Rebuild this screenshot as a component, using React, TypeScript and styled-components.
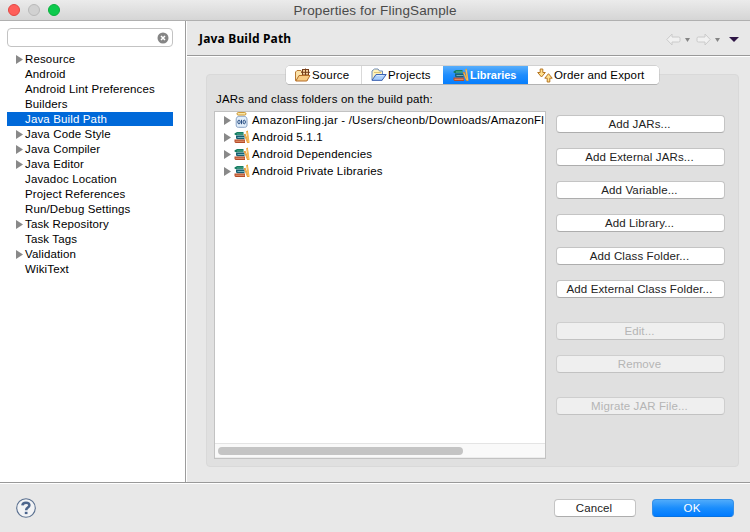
import React from 'react';
import styled, { createGlobalStyle } from 'styled-components';

const Global = createGlobalStyle`
  * { box-sizing: border-box; }
  body { margin: 0; background: #e8e8e8; overflow: hidden; }
  svg { display: block; flex: none; }
`;

const Window = styled.div`
  width: 750px;
  height: 532px;
  display: flex;
  flex-direction: column;
  background: #e8e8e8;
  color: #000;
  font-family: "Liberation Sans", Arial, sans-serif;
  font-size: 11.5px;
  letter-spacing: 0.14px;
  white-space: nowrap;
`;

const TitleBar = styled.header`
  height: 21px;
  flex: none;
  display: grid;
  grid-template-columns: 80px 1fr 80px;
  align-items: center;
  background: linear-gradient(#ebebeb, #d5d5d5);
  border-bottom: 1px solid #b0b0b0;
`;
const Lights = styled.div`
  display: flex;
  gap: 8px;
  padding-left: 8px;
`;
const Light = styled.span<{ $fill: string; $edge: string }>`
  width: 12px;
  height: 12px;
  border-radius: 50%;
  background: ${(p) => p.$fill};
  border: 1px solid ${(p) => p.$edge};
`;
const Title = styled.div`
  text-align: center;
  font-size: 13.5px;
  letter-spacing: 0.13px;
  color: #4a4a4a;
`;

const Body = styled.div`
  height: 461px;
  flex: none;
  display: flex;
`;
const Sidebar = styled.aside`
  width: 186px;
  flex: none;
  background: #fff;
  border-right: 1px solid #9c9c9c;
  padding: 7px 12px 0 7px;
`;
const SearchBox = styled.div`
  height: 19px;
  width: 166px;
  border: 1px solid #c3c3c3;
  border-radius: 4px;
  display: flex;
  align-items: center;
  justify-content: flex-end;
  padding-right: 3px;
  margin-bottom: 5px;
`;
const TreeRow = styled.div<{ $selected?: boolean }>`
  width: 166px;
  height: 14px;
  margin-bottom: 1px;
  display: grid;
  grid-template-columns: 9px 9px 1fr;
  align-items: center;
  line-height: 14px;
  background: ${(p) => (p.$selected ? '#0069d9' : 'transparent')};
  color: ${(p) => (p.$selected ? '#fff' : '#000')};
`;
const TreeLabel = styled.span`
  grid-column: 3;
`;
const Twisty = styled.span`
  grid-column: 2;
`;

const Content = styled.main`
  flex: 1;
  min-width: 0;
  border-left: 1px solid #fff;
  display: flex;
  flex-direction: column;
`;
const PageHeader = styled.div`
  height: 36px;
  flex: none;
  display: flex;
  align-items: center;
  justify-content: space-between;
  padding: 0 11px 0 12px;
  border-bottom: 1px solid #fff;
  box-shadow: inset 0 -1px 0 #999;
`;
const PageTitle = styled.h1`
  margin: 0;
  font-family: "Noto Sans", sans-serif;
  font-size: 12px;
  font-weight: 700;
  letter-spacing: 0.18px;
  line-height: 18px;
`;
const NavTools = styled.div`
  display: flex;
  align-items: center;
  margin-top: 2px;
`;
const NavGap = styled.span<{ $w: number }>`
  width: ${(p) => p.$w}px;
`;

const TabBar = styled.nav`
  height: 18px;
  margin: 9px 0 -10px 99px;
  width: 373px;
  flex: none;
  z-index: 1;
  display: flex;
  background: #fff;
  border-radius: 4px;
  box-shadow: 0 0 0 0.5px #b9b9b9, 0 1px 0 #adadad;
  overflow: hidden;
  overflow: clip;
`;
const Tab = styled.div<{ $w: number; $pad: number; $active?: boolean }>`
  width: ${(p) => p.$w}px;
  padding-left: ${(p) => p.$pad}px;
  display: flex;
  align-items: center;
  gap: 1px;
  font-size: ${(p) => (p.$active ? '11px' : '11.5px')};
  letter-spacing: ${(p) => (p.$active ? '0' : '0.14px')};
  font-weight: ${(p) => (p.$active ? 700 : 400)};
  color: ${(p) => (p.$active ? '#fff' : '#000')};
  background: ${(p) => (p.$active ? 'linear-gradient(#58aefb, #1f8dfd 50%, #067efd)' : '#fff')};
  &:first-child { border-right: 1px solid #d9d9d9; }
`;

const Group = styled.section`
  margin-left: 19px;
  width: 533px;
  height: 393px;
  flex: none;
  border: 1px solid #d9d9d9;
  border-radius: 4px;
  background: #e0e0e0;
  padding: 16px 13px 0 7px;
  display: grid;
  grid-template-columns: 332px 169px;
  grid-template-rows: 20px 348px;
  column-gap: 10px;
`;
const ListCaption = styled.div`
  grid-column: 1 / -1;
  padding-left: 2px;
  line-height: 16px;
  letter-spacing: 0.21px;
`;
const List = styled.div`
  border: 1px solid #c2c2c2;
  background: #fff;
  display: flex;
  flex-direction: column;
  min-width: 0;
  overflow: hidden;
`;
const ListRows = styled.div`
  flex: 1;
`;
const ListRow = styled.div`
  height: 17px;
  line-height: 16px;
  letter-spacing: 0.19px;
  display: flex;
  align-items: center;
  padding: 0 0 1px 9px;
`;
const RowIcon = styled.span`
  width: 16px;
  height: 16px;
  margin: 0 2px 0 3px;
  display: flex;
  align-items: center;
  justify-content: center;
`;
const ScrollTrack = styled.div`
  height: 15px;
  border-top: 1px solid #e4e4e4;
  border-bottom: 1px solid #ececec;
  background: #f9f9f9;
  padding: 3px;
`;
const ScrollThumb = styled.div`
  width: 245px;
  height: 8px;
  border-radius: 4px;
  background: #c4c4c4;
`;

const Actions = styled.div`
  padding-top: 4px;
  display: flex;
  flex-direction: column;
  gap: 15px;
`;
const Button = styled.button<{ $primary?: boolean; $before?: number; $w?: number }>`
  width: ${(p) => (p.$w ? `${p.$w}px` : '100%')};
  height: 18px;
  flex: none;
  margin: ${(p) => p.$before ?? 0}px 0 0;
  padding: 0 2px 0 0;
  border: 1px solid ${(p) => (p.$primary ? '#3590e8' : '#c4c4c4')};
  border-bottom-color: ${(p) => (p.$primary ? '#0872e0' : '#adadad')};
  border-radius: 4px;
  background: ${(p) => (p.$primary ? 'linear-gradient(#4fabfb, #1a8dfc 50%, #007bff)' : '#fff')};
  color: ${(p) => (p.$primary ? '#fff' : '#222')};
  font: 11.5px/16px "Liberation Sans", Arial, sans-serif;
  letter-spacing: 0.12px;
  &:disabled {
    background: #efefef;
    border-color: #cecece;
    border-bottom-color: #c2c2c2;
    color: #b5b5b5;
  }
`;

const Footer = styled.footer`
  height: 50px;
  border-top: 1px solid #999;
  box-shadow: inset 0 1px 0 #fff;
  display: flex;
  justify-content: space-between;
  align-items: center;
  padding: 1px 16px 0 15px;
`;
const FooterButtons = styled.div`
  display: flex;
  gap: 16px;
`;

const Arrow = () => (
  <svg width="7" height="9" viewBox="0 0 7 9"><path d="M0 0L7 4.5L0 9Z" fill="#898989" /></svg>
);

const ClearIcon = () => (
  <svg width="12" height="12" viewBox="0 0 12 12">
    <circle cx="6" cy="6" r="5.5" fill="#858585" />
    <path d="M4 4L8 8M8 4L4 8" stroke="#fff" strokeWidth="1.5" />
  </svg>
);

const BooksIcon = () => (
  <svg width="16" height="14" viewBox="0 0 16 14">
    <path d="M0.5 3.5L3 2H9.5V5.3H2L0.5 4.5Z" fill="#167d62" />
    <path d="M3 3.6H9.5V4.4H3Z" fill="#62b59b" />
    <path d="M2 5.6H10.5V9.2H3L2 8.2Z" fill="#175f73" />
    <path d="M3.5 7.2H10.3V8H3.5Z" fill="#8ec9cf" />
    <path d="M0.5 9.5H11V13H1.5L0.5 12Z" fill="#b64c28" />
    <path d="M1.5 10.7H10.5V11.7H1.5Z" fill="#e8a17a" />
    <path d="M9.8 4.6L11.4 3.8L14.8 12.2L13.2 13Z" fill="#e08a1c" />
    <path d="M12.2 1.2L13.8 0.4L15.6 12.8L14 13Z" fill="#eda12c" />
    <path d="M11 5.2L13.6 11.8M13.2 2L14.6 12" stroke="#ffd98c" strokeWidth="0.6" fill="none" />
  </svg>
);

const JarIcon = () => (
  <svg width="14" height="16" viewBox="0 0 14 16">
    <path d="M3 4.5C1.5 5.3 1.2 6 1.2 8V13C1.2 14.8 2 15.3 3.5 15.3H9.5C11.2 15.3 12 14.6 12 13V8C12 6 11.6 5.2 10.2 4.5Z" fill="#e3effb" stroke="#7b97bd" strokeWidth="0.9" />
    <path d="M3 4.2H10.2" stroke="#a7bfdb" />
    <rect x="2" y="0.6" width="9" height="2.4" rx="1.2" fill="#fff0b6" stroke="#c99028" />
    <g stroke="#294e83" fill="none"><ellipse cx="4" cy="10" rx="1.2" ry="1.9" /><path d="M6.5 7.8V12.2" /><ellipse cx="9.2" cy="10" rx="1.2" ry="1.9" /></g>
  </svg>
);

const SourceIcon = () => (
  <svg width="16" height="14" viewBox="0 0 16 14">
    <path d="M0.5 12.5V4L2 2.5H6L7 4H12V12.5Z" fill="#fce3aa" stroke="#b87a35" />
    <rect x="7.5" y="1.5" width="6" height="5.5" fill="#f2cf9c" stroke="#78401c" />
    <path d="M10.5 0.5V7M6 4.3H15" stroke="#78401c" />
    <path d="M0.8 13L4 7.5H15L11.8 13Z" fill="#f8cb83" stroke="#b36d28" />
  </svg>
);

const ProjectsIcon = () => (
  <svg width="16" height="14" viewBox="0 0 16 14">
    <path d="M1 12V3L3.5 1H7L8.5 3H11.5V12Z" fill="#fff2bd" stroke="#6e8bb8" />
    <path d="M3 4.5H10" stroke="#dfc474" />
    <path d="M1 12.3L5 6.5H15.2L11 12.3Z" fill="#a9cdfb" stroke="#3c62b2" />
    <path d="M5.5 7.7H12.5" stroke="#deedff" />
  </svg>
);

const OrderIcon = () => (
  <svg width="16" height="15" viewBox="0 0 16 15">
    <g fill="#ffe08d" stroke="#b57421" strokeWidth="1">
      <path d="M3.2 1H5.8V4.5H8.3L4.5 9L0.7 4.5H3.2Z" />
      <path d="M10.2 14H12.8V10.2H15.2L11.5 5.7L7.8 10.2H10.2Z" />
    </g>
  </svg>
);

const NavArrow = ({ flip }: { flip?: boolean }) => (
  <svg width="15" height="13" viewBox="0 0 15 13">
    <path
      transform={flip ? 'translate(15 0) scale(-1 1)' : undefined}
      d="M0.8 6.5L6 1V4H12.5Q14 4 14 5.2V7.8Q14 9 12.5 9H6V12Z"
      fill="#f1f1f1" stroke="#cacaca"
    />
  </svg>
);

const DownArrow = ({ w = 5, h = 4, fill = '#858585' }: { w?: number; h?: number; fill?: string }) => (
  <svg width={w} height={h} viewBox="0 0 10 6" preserveAspectRatio="none"><path d="M0 0H10L5 6Z" fill={fill} /></svg>
);

const HelpIcon = () => (
  <svg width="22" height="22" viewBox="0 0 22 22">
    <circle cx="11" cy="11" r="9.3" fill="#f2f3f5" stroke="#5a7090" strokeWidth="1.1" />
    <path d="M7.4 8.4C7.6 4.7 14.4 4.8 14.4 8.3C14.4 10.8 11.2 10.4 11.2 13.2" fill="none" stroke="#4c658c" strokeWidth="2.5" />
    <rect x="9.8" y="14.8" width="2.7" height="2.3" fill="#4c658c" />
  </svg>
);

const tree: [string, boolean][] = [
  ['Resource', true], ['Android', false], ['Android Lint Preferences', false], ['Builders', false],
  ['Java Build Path', false], ['Java Code Style', true], ['Java Compiler', true], ['Java Editor', true],
  ['Javadoc Location', false], ['Project References', false], ['Run/Debug Settings', false],
  ['Task Repository', true], ['Task Tags', false], ['Validation', true], ['WikiText', false],
];

const libraries = ['Android 5.1.1', 'Android Dependencies', 'Android Private Libraries'];
const additions = ['Add JARs...', 'Add External JARs...', 'Add Variable...', 'Add Library...', 'Add Class Folder...', 'Add External Class Folder...'];

export default function App() {
  return (
    <Window>
      <Global />
      <TitleBar>
        <Lights>
          <Light $fill="#ff5f5a" $edge="#e24843" />
          <Light $fill="#d1d1d1" $edge="#b9b9b9" />
          <Light $fill="#0cca4c" $edge="#09b03d" />
        </Lights>
        <Title>Properties for FlingSample</Title>
      </TitleBar>
      <Body>
        <Sidebar>
          <SearchBox><ClearIcon /></SearchBox>
          {tree.map(([label, expandable]) => (
            <TreeRow key={label} $selected={label === 'Java Build Path'}>
              {expandable && <Twisty><Arrow /></Twisty>}
              <TreeLabel>{label}</TreeLabel>
            </TreeRow>
          ))}
        </Sidebar>
        <Content>
          <PageHeader>
            <PageTitle>Java Build Path</PageTitle>
            <NavTools>
              <NavArrow /><NavGap $w={4} /><DownArrow /><NavGap $w={6} />
              <NavArrow flip /><NavGap $w={4} /><DownArrow /><NavGap $w={9} />
              <DownArrow w={10} h={5} fill="#2e1545" />
            </NavTools>
          </PageHeader>
          <TabBar>
            <Tab $w={76} $pad={9}><SourceIcon />Source</Tab>
            <Tab $w={81} $pad={9}><ProjectsIcon />Projects</Tab>
            <Tab $w={85} $pad={10} $active><BooksIcon />Libraries</Tab>
            <Tab $w={131} $pad={9}><OrderIcon />Order and Export</Tab>
          </TabBar>
          <Group>
            <ListCaption>JARs and class folders on the build path:</ListCaption>
            <List>
              <ListRows>
                <ListRow><Arrow /><RowIcon><JarIcon /></RowIcon>AmazonFling.jar - /Users/cheonb/Downloads/AmazonFl</ListRow>
                {libraries.map((name) => (
                  <ListRow key={name}><Arrow /><RowIcon><BooksIcon /></RowIcon>{name}</ListRow>
                ))}
              </ListRows>
              <ScrollTrack><ScrollThumb /></ScrollTrack>
            </List>
            <Actions>
              {additions.map((name) => <Button key={name}>{name}</Button>)}
              <Button disabled $before={9}>Edit...</Button>
              <Button disabled>Remove</Button>
              <Button disabled $before={9}>Migrate JAR File...</Button>
            </Actions>
          </Group>
        </Content>
      </Body>
      <Footer>
        <HelpIcon />
        <FooterButtons>
          <Button $w={82}>Cancel</Button>
          <Button $w={82} $primary>OK</Button>
        </FooterButtons>
      </Footer>
    </Window>
  );
}
